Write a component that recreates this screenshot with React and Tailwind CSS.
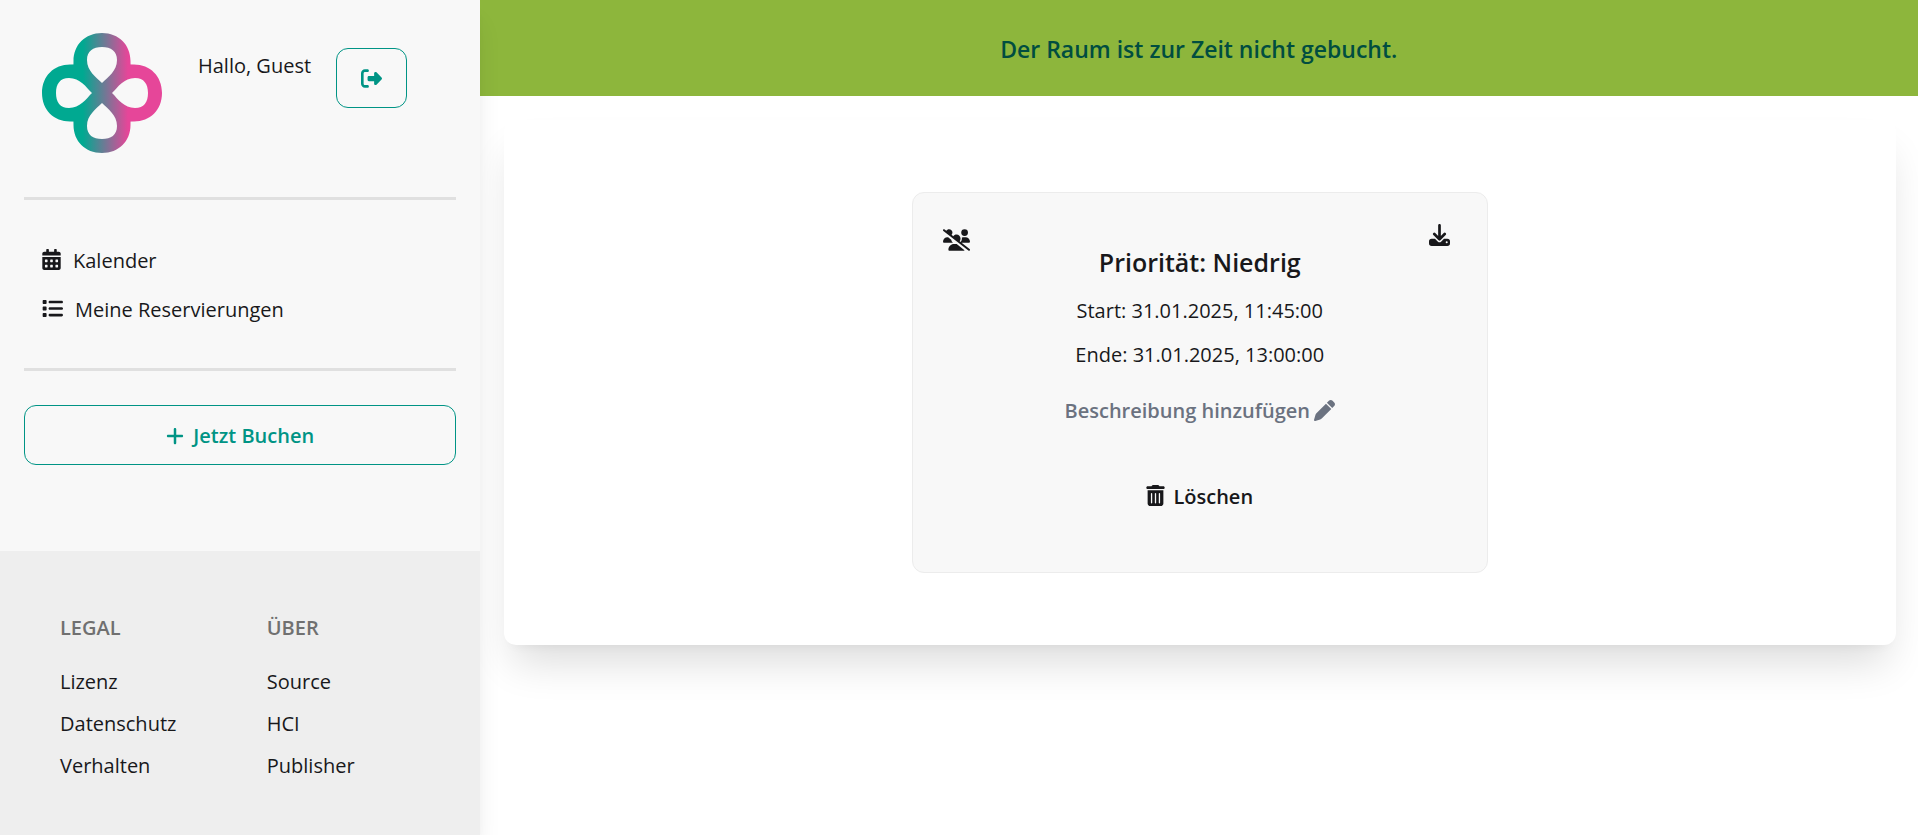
import { FaPlus, FaRightFromBracket, FaUsersSlash, FaPen, FaTrashCan, FaList } from 'react-icons/fa6';
import { FaCalendarAlt } from 'react-icons/fa';

const TEARDROP = 'M60 50 C54 44 45 38 45 27 C45 18 51 14 60 14 C69 14 75 18 75 27 C75 38 66 44 60 50 Z';
const ARM = 'M60 60 L31 60 L31.500 28 C31.500 12 43 0 60 0 C77 0 88.500 12 88.500 28 L89 60 Z';

function Logo() {
  return (
    <svg viewBox="0 0 120 120" className="size-30 shrink-0" role="img" aria-label="Logo">
      <defs>
        <linearGradient id="brand" gradientUnits="userSpaceOnUse" x1="41" y1="0" x2="86" y2="0">
          <stop offset="0" stopColor="#00a991" />
          <stop offset="1" stopColor="#e64699" />
        </linearGradient>
        <mask id="petals">
          {[0, 90, 180, 270].map((a) => (
            <path key={a} d={ARM} fill="#fff" transform={`rotate(${a} 60 60)`} />
          ))}
          {[0, 90, 180, 270].map((a) => (
            <path key={a} d={TEARDROP} fill="#000" transform={`rotate(${a} 60 60)`} />
          ))}
        </mask>
      </defs>
      <rect width="120" height="120" fill="url(#brand)" mask="url(#petals)" />
    </svg>
  );
}

function DownloadIcon() {
  return (
    <svg viewBox="0 0 21 22" className="h-[22px] w-[21px]" fill="currentColor" aria-hidden="true">
      <path d="M10.500 1.300v13M5.300 10l5.200 5.200 5.200-5.200" fill="none" stroke="currentColor" strokeWidth="2.700" strokeLinecap="round" strokeLinejoin="round" />
      <path fillRule="evenodd" d="M2.700 14.700H6l2.700 2.700a2.500 2.500 0 0 0 3.600 0l2.700-2.700h3.300a2.700 2.700 0 0 1 2.700 2.700v1.900a2.700 2.700 0 0 1-2.700 2.700H2.700A2.700 2.700 0 0 1 0 19.300v-1.900a2.700 2.700 0 0 1 2.700-2.700Zm15 2.600a1 1 0 1 0 0 2 1 1 0 0 0 0-2Z" />
    </svg>
  );
}

const FOOTER = [
  { title: 'LEGAL', links: ['Lizenz', 'Datenschutz', 'Verhalten'] },
  { title: 'ÜBER', links: ['Source', 'HCI', 'Publisher'] },
];

export default function App() {
  return (
    <div className="flex min-h-screen bg-white font-['Open_Sans','Noto_Sans',sans-serif] text-[20px] leading-[30px] text-[#18181b]">
      <aside className="relative z-10 flex w-1/4 flex-col bg-[#f8f8f8] shadow-xl">
        <div className="flex flex-1 flex-col px-6">
          <header className="flex items-start px-[18px] pt-[33px] pb-11">
            <Logo />
            <span className="ml-9 pt-[18px]">Hallo, Guest</span>
            <button type="button" aria-label="Abmelden" className="mt-[15px] ml-[25px] flex h-15 w-[71px] items-center justify-center rounded-xl border border-[#009485] text-[#009485]">
              <FaRightFromBracket className="size-[21px]" />
            </button>
          </header>
          <hr className="border-t-3 border-[#e0e0e0]" />
          <nav className="flex flex-col gap-[19px] px-[18px] pt-[46px] pb-[43px]">
            <a href="#kalender" className="flex items-center">
              <FaCalendarAlt className="mr-3 mb-1 h-[21px] w-[19px]" />
              Kalender
            </a>
            <a href="#reservierungen" className="flex items-center">
              <FaList className="mr-3 mb-1 size-[21px]" />
              Meine Reservierungen
            </a>
          </nav>
          <hr className="border-t-3 border-[#e0e0e0]" />
          <button type="button" className="mt-[34px] flex h-15 items-center justify-center gap-2 rounded-xl border border-[#009485] pt-px font-semibold text-[#009485]">
            <FaPlus className="size-5" />
            Jetzt Buchen
          </button>
        </div>
        <footer className="grid grid-cols-2 gap-x-[54px] bg-[#eeeeee] px-15 pt-[62px] pb-[54px]">
          {FOOTER.map((col) => (
            <nav key={col.title} className="flex flex-col items-start gap-3" aria-label={col.title}>
              <h2 className="mb-3 font-semibold text-[#707070]">{col.title}</h2>
              {col.links.map((l) => (
                <a key={l} href={`#${l.toLowerCase()}`}>{l}</a>
              ))}
            </nav>
          ))}
        </footer>
      </aside>

      <main className="flex-1">
        <div role="status" className="flex h-24 items-center justify-center bg-[#8db63c] pt-[2px] text-[23px] font-semibold text-[#004d40]">
          Der Raum ist zur Zeit nicht gebucht.
        </div>
        <section className="mt-6 mr-[22px] ml-6 flex justify-center rounded-xl bg-white py-18 shadow-[0_26px_42px_-9px_rgba(0,0,0,0.14),0_8px_12px_-8px_rgba(0,0,0,0.05)]">
          <article className="relative flex w-[576px] flex-col items-center rounded-xl border border-[#ececec] bg-[#f8f8f8] pt-[51px] pb-15">
            <FaUsersSlash className="absolute top-[34px] left-[30px] h-[26px] w-[27px]" />
            <button type="button" aria-label="Herunterladen" className="absolute top-[31px] right-[37px]">
              <DownloadIcon />
            </button>
            <h1 className="text-[25px] leading-9 font-semibold">Priorität: Niedrig</h1>
            <p className="mt-4">Start: 31.01.2025, 11:45:00</p>
            <p className="mt-[14px]">Ende: 31.01.2025, 13:00:00</p>
            <button type="button" className="mt-[26px] flex items-center gap-1 font-semibold text-[#6b7280]">
              Beschreibung hinzufügen
              <FaPen className="mb-[2px] size-[21px]" />
            </button>
            <button type="button" className="mt-14 flex items-center gap-2 font-semibold">
              <FaTrashCan className="mb-1 h-[21px] w-[19px]" />
              Löschen
            </button>
          </article>
        </section>
      </main>
    </div>
  );
}
